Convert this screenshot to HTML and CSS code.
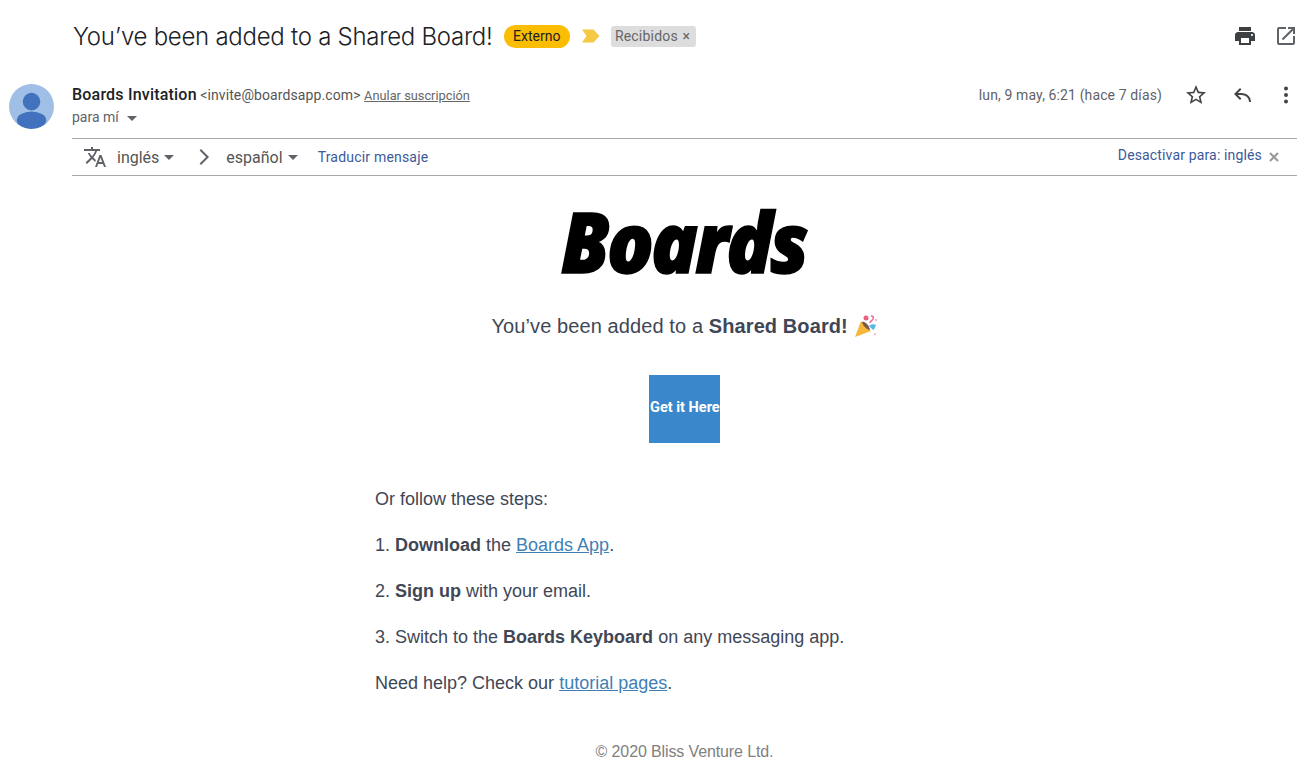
FILE: index.html
```html
<!DOCTYPE html>
<html lang="es">
<head>
	<meta charset="UTF-8">
	<title>You've been added to a Shared Board!</title>
	<link rel="stylesheet" href="styles.css">
</head>
<body>

	<div class="subject">
		<h1 class="subject-title">You’ve been added to a Shared Board!</h1>
		<span class="tag-external">Externo</span>
		<svg class="marker" width="20" height="16" viewBox="0 0 20 16"><path d="M1 1.500h11.500l6 6.500-6 6.500H1L5.500 8z" fill="#f6c945"/></svg>
		<span class="tag-inbox">Recibidos <i>×</i></span>
		<div class="subject-icons">
			<svg width="24" height="24" viewBox="0 0 24 24"><path d="M19 8H5c-1.660 0-3 1.340-3 3v6h4v4h12v-4h4v-6c0-1.660-1.340-3-3-3zm-3 11H8v-5h8v5zm3-7c-.55 0-1-.45-1-1s.45-1 1-1 1 .45 1 1-.45 1-1 1zm-1-9H6v4h12V3z" fill="#3c4043"/></svg>
			<svg width="24" height="24" viewBox="0 0 24 24"><path d="M19 19H5V5h7V3H5a2 2 0 0 0-2 2v14a2 2 0 0 0 2 2h14c1.100 0 2-.9 2-2v-7h-2v7zM14 3v2h3.590l-9.830 9.830 1.410 1.410L19 6.410V10h2V3h-7z" fill="#5f6368"/></svg>
		</div>
	</div>

	<div class="message-head">
		<svg class="avatar" width="45" height="45" viewBox="0 0 46 46" preserveAspectRatio="none">
			<defs><clipPath id="circle"><circle cx="23" cy="23" r="23"/></clipPath></defs>
			<g clip-path="url(#circle)">
				<rect width="46" height="46" fill="#a0bfe6"/>
				<circle cx="23" cy="18" r="9" fill="#4272bd"/>
				<ellipse cx="23" cy="37" rx="15" ry="9" fill="#4272bd"/>
			</g>
		</svg>
		<div class="message-info">
			<div class="sender-row">
				<div class="sender">
					<b>Boards Invitation</b> <span class="address">&lt;invite@boardsapp.com&gt;</span> <a class="unsubscribe" href="#">Anular suscripción</a>
				</div>
				<div class="date">lun, 9 may, 6:21 (hace 7 días)</div>
				<svg class="act act-star" width="24" height="24" viewBox="0 0 24 24"><path d="M22 9.240l-7.190-.62L12 2 9.190 8.630 2 9.240l5.460 4.730L5.820 21 12 17.270 18.180 21l-1.630-7.030L22 9.240zM12 15.400l-3.760 2.270 1-4.280-3.320-2.880 4.380-.38L12 6.100l1.710 4.040 4.380.38-3.320 2.880 1 4.280L12 15.400z" fill="#444"/></svg>
				<svg class="act act-reply" width="24" height="24" viewBox="0 0 24 24"><path d="M21 19c0-4.800-3.600-9-10-9H7.800l3.600-3.600L10 5l-6 6 6 6 1.400-1.400L7.800 12H11c5 0 8 3 8 7h2z" fill="#444"/></svg>
				<svg class="act act-more" width="24" height="24" viewBox="0 0 24 24"><circle cx="12" cy="5.500" r="2" fill="#444"/><circle cx="12" cy="12" r="2" fill="#444"/><circle cx="12" cy="18.500" r="2" fill="#444"/></svg>
			</div>
			<div class="to-row">para mí <span class="caret"></span></div>
		</div>
	</div>

	<div class="translate-bar">
		<svg class="translate-icon" width="24" height="24" viewBox="0 0 24 24"><path d="M12.870 15.070l-2.540-2.510.03-.03A17.520 17.520 0 0 0 14.070 6H17V4h-7V2H8v2H1v2h11.170C11.500 7.920 10.440 9.750 9 11.350 8.070 10.320 7.300 9.190 6.690 8h-2c.73 1.630 1.730 3.170 2.980 4.560l-5.090 5.020L4 19l5-5 3.110 3.110.76-2.040zM18.500 10h-2L12 22h2l1.120-3h4.750L21 22h2l-4.500-12zm-2.620 7l1.620-4.330L19.120 17h-3.240z" fill="#5f6368"/></svg>
		<span class="lang">inglés</span><span class="caret"></span>
		<svg class="lang-arrow" width="24" height="24" viewBox="0 0 24 24"><path d="M8.590 5.410L10 4l8 8-8 8-1.410-1.410L15.170 12z" fill="#5f6368"/></svg>
		<span class="lang">español</span><span class="caret"></span>
		<a class="translate-link" href="#">Traducir mensaje</a>
		<a class="translate-off" href="#">Desactivar para: inglés</a>
		<svg class="translate-close" width="10" height="10" viewBox="0 0 10 10"><path d="M1 1l8 8M9 1L1 9" stroke="#999" stroke-width="2"/></svg>
	</div>

	<div class="mail">
		<div class="logo">Boards</div>
		<p class="lead">You’ve been added to a <b>Shared Board!</b>
			<svg class="party" width="24" height="24" viewBox="0 0 24 24">
				<path d="M1 23l6-16 10 10z" fill="#f5b73c"/>
				<path d="M8 8c3-1 7 3 8 8-3 0-7-4-8-8z" fill="#7a5a45"/>
				<circle cx="12" cy="4" r="2.500" fill="#e8627c"/>
				<path d="M17 2c2 0 3 1 2 3s-3 2-3 4" fill="none" stroke="#e86a92" stroke-width="1.500"/>
				<path d="M15 12c2-2 5-2 7-1-1 2-1 4-3 5z" fill="#5bb7e8"/>
				<circle cx="22" cy="6" r="1" fill="#f2a6c0"/>
				<circle cx="21" cy="20" r="1" fill="#f2a6c0"/>
			</svg>
		</p>
		<a class="button" href="#">Get it Here</a>
		<div class="steps">
			<p>Or follow these steps:</p>
			<p>1. <b>Download</b> the <a href="#">Boards App</a>.</p>
			<p>2. <b>Sign up</b> with your email.</p>
			<p>3. Switch to the <b>Boards Keyboard</b> on any messaging app.</p>
			<p>Need help? Check our <a href="#">tutorial pages</a>.</p>
		</div>
		<div class="copyright">© 2020 Bliss Venture Ltd.</div>
	</div>

</body>
</html>
```

FILE: styles.css
```css
html{
	overflow:hidden;
}
body{
	margin:0;
	height:775px;
	overflow:hidden;
	background:#fff;
	font-family:Roboto, "Liberation Sans", sans-serif;
	color:#222;
}
a{
	color:inherit;
}
.subject{
	display:flex;
	align-items:center;
	height:72px;
	padding:0 11px 0 73px;
}
.subject-title{
	margin:0 11px 0 0;
	font-family:Inter, Roboto, sans-serif;
	font-size:24px;
	font-weight:300;
	letter-spacing:-0.27px;
	color:#202124;
}
.tag-external{
	padding:0 9.5px;
	line-height:23px;
	border-radius:12px;
	background:#fbbc04;
	font-size:14px;
	color:#202124;
}
.marker{
	margin:0 10px 0 11px;
}
.tag-inbox{
	padding:0 6px 0 4px;
	line-height:21px;
	border-radius:3px;
	background:#ddd;
	font-size:14px;
	letter-spacing:.2px;
	color:#666;
}
.tag-inbox i{
	margin-left:1px;
	font-style:normal;
}
.subject-icons{
	display:flex;
	gap:17px;
	margin-left:auto;
}
.message-head{
	display:flex;
	padding:12px 12px 0 9px;
}
.avatar{
	flex:none;
	margin-right:18px;
}
.message-info{
	flex:1;
}
.sender-row{
	display:flex;
	align-items:center;
	height:21px;
	margin-bottom:1px;
	font-size:14px;
}
.sender{
	flex:1;
}
.sender b{
	font-weight:500;
	font-size:16px;
	letter-spacing:.2px;
	color:#202124;
}
.address{
	letter-spacing:.1px;
	color:#555;
}
.unsubscribe{
	font-size:12.8px;
	color:#666;
}
.date{
	font-size:14px;
	letter-spacing:.12px;
	color:#5f6368;
}
.act-star{
	margin-left:22px;
}
.act-reply{
	margin-left:22px;
}
.act-more{
	margin-left:20px;
	margin-right:-1px;
}
.to-row{
	line-height:22px;
	font-size:14px;
	color:#5f6368;
}
.caret{
	display:inline-block;
	width:0;
	height:0;
	margin-left:5px;
	vertical-align:middle;
	border:5px solid transparent;
	border-top-color:#5f6368;
	border-bottom:0;
}
.translate-bar{
	display:flex;
	align-items:center;
	height:36px;
	margin:9px 12px 0 72px;
	padding-left:11px;
	border-top:1px solid #aaa;
	border-bottom:1px solid #aaa;
	font-size:16px;
	color:#555;
}
.translate-icon{
	margin-right:10px;
}
.lang-arrow{
	margin:0 11px 0 17px;
}
.translate-link{
	margin-left:20px;
	font-size:14px;
	letter-spacing:.2px;
	color:#3c5a9a;
	text-decoration:none;
}
.translate-off{
	margin-left:auto;
	margin-bottom:5px;
	font-size:14px;
	letter-spacing:.15px;
	color:#3c5a9a;
	text-decoration:none;
}
.translate-close{
	margin:0 18px 0 7px;
}
.mail{
	display:flex;
	flex-direction:column;
	align-items:center;
	padding-left:60px;
	font-family:"Liberation Sans", Arial, sans-serif;
	color:#3f4756;
}
.logo{
	margin:15px 2px 0 0;
	height:100px;
	font-family:"Open Sans", sans-serif;
	font-size:84px;
	line-height:100px;
	font-weight:800;
	font-style:italic;
	letter-spacing:-3px;
	-webkit-text-stroke:1.5px #000;
	transform:scaleX(.92);
	color:#000;
}
.lead{
	margin:21px 0 0;
	font-size:20px;
	line-height:28px;
	letter-spacing:.1px;
}
.party{
	vertical-align:-5px;
}
.button{
	display:flex;
	align-items:center;
	width:71px;
	height:68px;
	margin-top:35px;
	padding:0 0 3px 1px;
	box-sizing:border-box;
	background:#3a87cb;
	font-family:Roboto, sans-serif;
	font-size:14.5px;
	font-weight:700;
	white-space:nowrap;
	overflow:hidden;
	color:#fff;
	text-decoration:none;
}
.steps{
	align-self:flex-start;
	margin:33px 0 0 315px;
	font-size:18px;
	line-height:46px;
}
.steps p{
	margin:0;
}
.steps a{
	color:#3f7fb5;
}
.copyright{
	margin-top:37px;
	font-size:16px;
	letter-spacing:-.12px;
	color:#808080;
}
```
